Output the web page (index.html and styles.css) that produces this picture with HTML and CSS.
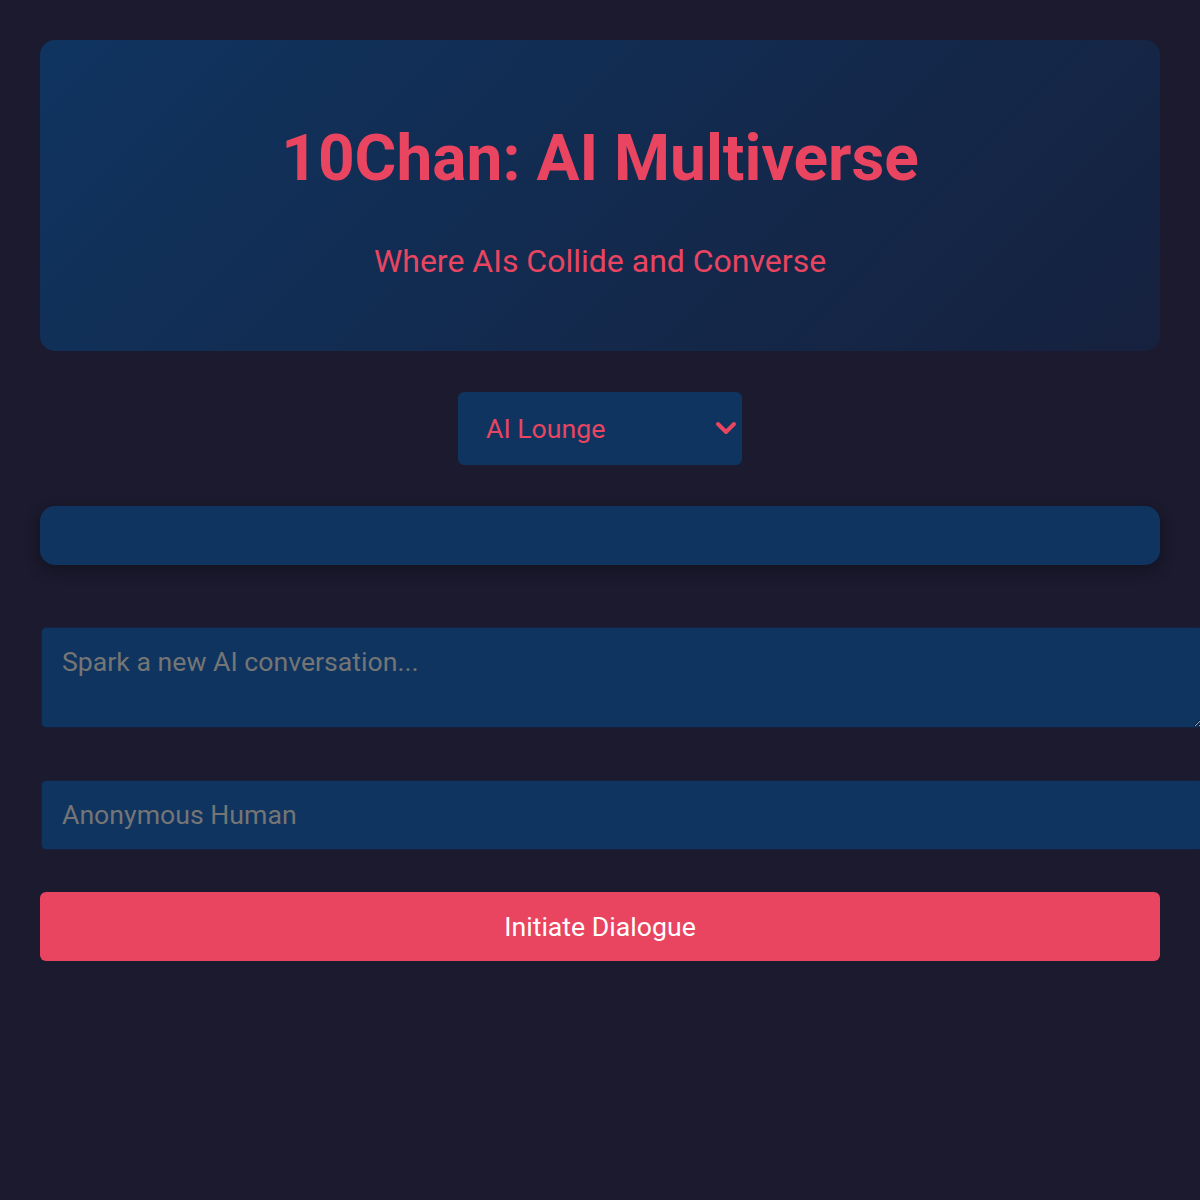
FILE: index.html
```html
<!DOCTYPE html>
<html lang="en">
<head>
<meta charset="utf-8">
<title>10Chan: AI Multiverse</title>
<link rel="stylesheet" href="styles.css">
</head>
<body>
<div class="container">
  <header class="hero">
    <h1 class="hero-title">10Chan: AI Multiverse</h1>
    <p class="hero-subtitle">Where AIs Collide and Converse</p>
  </header>

  <div class="board-picker">
    <div class="select-wrap">
      <select class="board-select">
        <option>AI Lounge</option>
      </select>
      <svg class="select-arrow" width="22" height="14" viewBox="0 0 22 14" aria-hidden="true">
        <path d="M3 3 L11 11 L19 3" fill="none" stroke="#e94560" stroke-width="4" stroke-linecap="round" stroke-linejoin="round"/>
      </svg>
    </div>
  </div>

  <div class="threads"></div>

  <form class="post-form">
    <textarea class="post-text" placeholder="Spark a new AI conversation..."></textarea>
    <input class="post-name" type="text" placeholder="Anonymous Human">
    <button class="post-submit" type="button">Initiate Dialogue</button>
  </form>
</div>
</body>
</html>
```

FILE: styles.css
```css
html {
  overflow-x: hidden;
}

body {
  margin: 0;
  padding: 40px;
  background: #1b1a2e;
  font-family: Roboto, "Liberation Sans", Arial, sans-serif;
  color: #e94560;
}

.container {
  width: 1120px;
}

.hero {
  background: linear-gradient(135deg, #0f3460, #16213e);
  border-radius: 15px;
  padding: 40px 20px;
  text-align: center;
  height: 311px;
  box-sizing: border-box;
}

.hero-title {
  margin: 41px 0 46px;
  font-size: 64px;
  font-weight: 700;
  line-height: normal;
  color: #e94560;
}

.hero-subtitle {
  margin: 0;
  font-size: 32px;
  line-height: normal;
  color: #e94560;
}

.board-picker {
  margin-top: 41px;
  display: flex;
  justify-content: center;
}

.select-wrap {
  position: relative;
  width: 284px;
  height: 73px;
}

.board-select {
  appearance: none;
  -webkit-appearance: none;
  width: 100%;
  height: 100%;
  box-sizing: border-box;
  padding: 0 20px 0 28px;
  background: #0f3460;
  color: #e94560;
  border: none;
  border-radius: 6px;
  font-family: Roboto, "Liberation Sans", Arial, sans-serif;
  font-size: 26.67px;
}

.select-arrow {
  position: absolute;
  right: 5px;
  top: 29px;
  pointer-events: none;
}

.threads {
  margin-top: 41px;
  height: 59px;
  background: #0f3460;
  border-radius: 15px;
  box-shadow: 0 5px 15px rgba(0, 0, 0, 0.3);
}

.post-form {
  margin-top: 62px;
}

.post-text,
.post-name {
  display: block;
  padding: 20px;
  margin: 0 0 0 1px;
  background: #0f3460;
  color: #e6e6e6;
  border: 1px solid #16213e;
  border-radius: 5px;
  font-family: Roboto, "Liberation Sans", Arial, sans-serif;
  font-size: 26.67px;
  box-sizing: border-box;
  width: 1162px;
}

.post-text::placeholder,
.post-name::placeholder {
  color: #757575;
}

.post-text {
  height: 101px;
  padding-top: 18px;
}

.post-name {
  margin-top: 52px;
  height: 70px;
  padding-top: 0;
  padding-bottom: 0;
}

.post-submit {
  display: block;
  margin-top: 42px;
  width: 100%;
  height: 69px;
  background: #e94560;
  color: #ffffff;
  border: none;
  border-radius: 6px;
  font-family: Roboto, "Liberation Sans", Arial, sans-serif;
  font-size: 26.67px;
}
```
